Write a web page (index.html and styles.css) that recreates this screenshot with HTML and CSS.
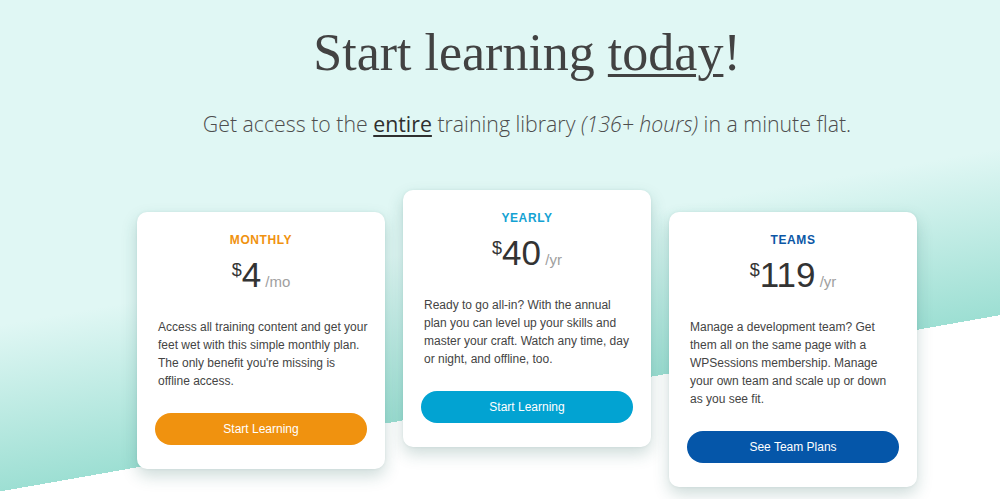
FILE: index.html
```html
<!DOCTYPE html>
<html lang="en">
<head>
<meta charset="utf-8">
<title>Pricing</title>
<link rel="stylesheet" href="styles.css">
</head>
<body>
<main class="page">
  <section class="hero">
    <h1 class="title">Start learning <u class="title-em">today</u>!</h1>
    <p class="lead">Get access to the <u class="lead-em">entire</u> training library <i>(136+ hours)</i> in a minute flat.</p>
  </section>
  <section class="plans">
    <article class="card card-monthly">
      <h2 class="plan-name">MONTHLY</h2>
      <div class="price"><span class="cur">$</span>4<span class="per"> /mo</span></div>
      <p class="desc">Access all training content and get your feet wet with this simple monthly plan. The only benefit you're missing is offline access.</p>
      <a class="btn" href="#">Start Learning</a>
    </article>
    <article class="card card-yearly">
      <h2 class="plan-name">YEARLY</h2>
      <div class="price"><span class="cur">$</span>40<span class="per"> /yr</span></div>
      <p class="desc">Ready to go all-in? With the annual plan you can level up your skills and master your craft. Watch any time, day or night, and offline, too.</p>
      <a class="btn" href="#">Start Learning</a>
    </article>
    <article class="card card-teams">
      <h2 class="plan-name">TEAMS</h2>
      <div class="price"><span class="cur">$</span>119<span class="per"> /yr</span></div>
      <p class="desc">Manage a development team? Get them all on the same page with a WPSessions membership. Manage your own team and scale up or down as you see fit.</p>
      <a class="btn" href="#">See Team Plans</a>
    </article>
  </section>
</main>
</body>
</html>
```
FILE: styles.css
```css
* { box-sizing: border-box; }
html, body { margin: 0; padding: 0; }
body {
  font-family: "Liberation Sans", Arial, sans-serif;
  background: #fff;
}
.page {
  height: 499px;
  overflow: hidden;
  padding-left: 54px;
  background: linear-gradient(170deg, #e0f7f4 0px, #e0f7f4 320px, #9ddfd3 484px, #ffffff 484px, #ffffff 100%);
}
.hero {
  text-align: center;
  padding-top: 22px;
}
.title {
  margin: 0;
  font-family: "Liberation Serif", "Times New Roman", serif;
  font-weight: 400;
  font-size: 52px;
  line-height: 62px;
  color: #424242;
}
.title-em {
  text-decoration: underline;
  text-decoration-thickness: 3px;
  text-underline-offset: 4px;
}
.lead {
  margin: 25px 0 0;
  font-family: "Open Sans", "Liberation Sans", sans-serif;
  font-weight: 300;
  font-size: 21.3px;
  line-height: 30px;
  color: #4d4d4d;
}
.lead-em {
  color: #2f2f2f;
  font-weight: 400;
  text-decoration-thickness: 2px;
  text-underline-offset: 3px;
}
.plans {
  display: flex;
  justify-content: center;
  align-items: flex-start;
  gap: 18px;
  margin-top: 73px;
}
.card {
  width: 248px;
  background: #fff;
  border-radius: 10px;
  padding: 21px 18px 24px;
  box-shadow: 0 7px 16px rgba(30, 95, 85, 0.22), 0 0 3px rgba(30, 95, 85, 0.08);
  display: flex;
  flex-direction: column;
  align-items: stretch;
  text-align: center;
}
.card-yearly { transform: translateY(-22px); }
.plan-name {
  margin: 0;
  font-size: 12px;
  line-height: 14px;
  font-weight: 700;
  letter-spacing: 0.6px;
}
.card-monthly .plan-name { color: #f0920f; }
.card-yearly .plan-name { color: #14a2d3; }
.card-teams .plan-name { color: #0b57a6; }
.price {
  margin-top: 8px;
  font-size: 35px;
  line-height: 40px;
  color: #333;
}
.cur {
  font-size: 18px;
  line-height: 1;
  vertical-align: 11px;
}
.per {
  font-size: 15px;
  line-height: 1;
  color: #a0a0a0;
}
.desc {
  margin: 23px 0 0;
  width: 214px;
  padding-left: 3px;
  text-align: left;
  font-size: 12px;
  line-height: 18px;
  color: #444;
}
.btn {
  display: block;
  margin-top: 23px;
  height: 32px;
  line-height: 32px;
  border-radius: 16px;
  color: #fff;
  font-size: 12px;
  text-decoration: none;
  text-align: center;
}
.card-monthly .btn { background: #f0920f; }
.card-yearly .btn { background: #02a3d2; }
.card-teams .btn { background: #0556a9; }
```
